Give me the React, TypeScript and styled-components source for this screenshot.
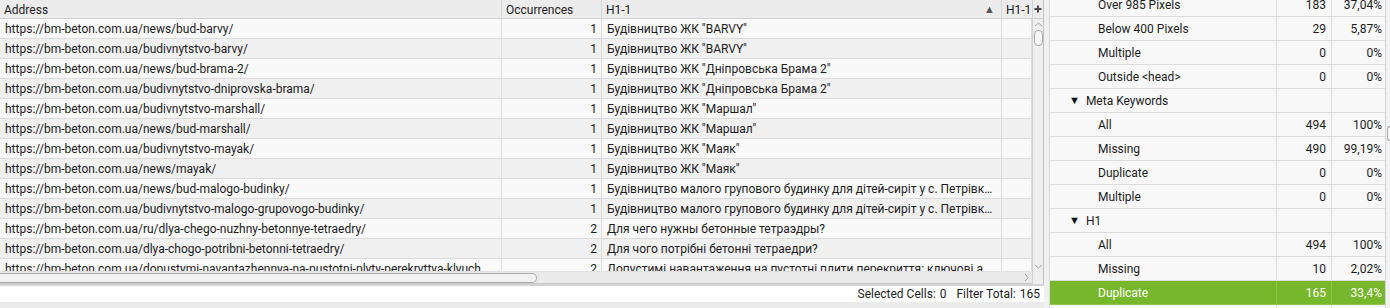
import React from "react";
import styled, { createGlobalStyle } from "styled-components";

const GlobalStyle = createGlobalStyle`
  html, body {
    margin: 0;
    padding: 0;
    background: #ebebeb;
  }
  * {
    box-sizing: border-box;
  }
`;

type Row = { url: string; count: number; h1: string };

const rows: Row[] = [
  { url: "https://bm-beton.com.ua/news/bud-barvy/", count: 1, h1: 'Будівництво ЖК "BARVY"' },
  { url: "https://bm-beton.com.ua/budivnytstvo-barvy/", count: 1, h1: 'Будівництво ЖК "BARVY"' },
  { url: "https://bm-beton.com.ua/news/bud-brama-2/", count: 1, h1: 'Будівництво ЖК "Дніпровська Брама 2"' },
  { url: "https://bm-beton.com.ua/budivnytstvo-dniprovska-brama/", count: 1, h1: 'Будівництво ЖК "Дніпровська Брама 2"' },
  { url: "https://bm-beton.com.ua/budivnytstvo-marshall/", count: 1, h1: 'Будівництво ЖК "Маршал"' },
  { url: "https://bm-beton.com.ua/news/bud-marshall/", count: 1, h1: 'Будівництво ЖК "Маршал"' },
  { url: "https://bm-beton.com.ua/budivnytstvo-mayak/", count: 1, h1: 'Будівництво ЖК "Маяк"' },
  { url: "https://bm-beton.com.ua/news/mayak/", count: 1, h1: 'Будівництво ЖК "Маяк"' },
  {
    url: "https://bm-beton.com.ua/news/bud-malogo-budinky/",
    count: 1,
    h1: "Будівництво малого групового будинку для дітей-сиріт у с. Петрівка Київської області",
  },
  {
    url: "https://bm-beton.com.ua/budivnytstvo-malogo-grupovogo-budinky/",
    count: 1,
    h1: "Будівництво малого групового будинку для дітей-сиріт у с. Петрівка Київської області",
  },
  { url: "https://bm-beton.com.ua/ru/dlya-chego-nuzhny-betonnye-tetraedry/", count: 2, h1: "Для чего нужны бетонные тетраэдры?" },
  { url: "https://bm-beton.com.ua/dlya-chogo-potribni-betonni-tetraedry/", count: 2, h1: "Для чого потрібні бетонні тетраедри?" },
  {
    url: "https://bm-beton.com.ua/dopustymi-navantazhennya-na-pustotni-plyty-perekryttya-klyuch",
    count: 2,
    h1: "Допустимі навантаження на пустотні плити перекриття: ключові а",
  },
];

type Stat = { label: string; count?: string; pct?: string; group?: boolean; active?: boolean };

const stats: Stat[] = [
  { label: "Over 985 Pixels", count: "183", pct: "37,04%" },
  { label: "Below 400 Pixels", count: "29", pct: "5,87%" },
  { label: "Multiple", count: "0", pct: "0%" },
  { label: "Outside <head>", count: "0", pct: "0%" },
  { label: "Meta Keywords", group: true },
  { label: "All", count: "494", pct: "100%" },
  { label: "Missing", count: "490", pct: "99,19%" },
  { label: "Duplicate", count: "0", pct: "0%" },
  { label: "Multiple", count: "0", pct: "0%" },
  { label: "H1", group: true },
  { label: "All", count: "494", pct: "100%" },
  { label: "Missing", count: "10", pct: "2,02%" },
  { label: "Duplicate", count: "165", pct: "33,4%", active: true },
  { label: "" },
];

const Page = styled.div`
  display: flex;
  width: 1390px;
  height: 308px;
  overflow: hidden;
  font-family: Roboto, "Liberation Sans", Arial, sans-serif;
  font-size: 12px;
  color: #1c1c1c;
  background: #ebebeb;
`;

const LeftPane = styled.div`
  display: flex;
  flex-direction: column;
  width: 1044px;
  flex-shrink: 0;
`;

const TableArea = styled.div`
  display: flex;
  height: 286px;
  border-bottom: 2px solid #d4d4d4;
  background: #f4f4f4;
`;

const GridCol = styled.div`
  display: flex;
  flex-direction: column;
  width: 1032px;
  overflow: hidden;
`;

const HeaderRow = styled.div`
  display: grid;
  grid-template-columns: 502px 100px 400px 30px;
  height: 19px;
  background: #ececec;
  border-bottom: 1px solid #cfcfcf;
`;

const HeadCell = styled.div<{ $last?: boolean }>`
  display: flex;
  align-items: center;
  justify-content: space-between;
  padding: 1px 5px 0 4px;
  border-right: ${(p) => (p.$last ? "none" : "1px solid #d6d6d6")};
  white-space: nowrap;
  overflow: hidden;
`;

const SortArrow = styled.span`
  font-size: 11px;
  color: #555;
  margin-right: 1px;
`;

const Body = styled.div`
  flex: 1;
  overflow: hidden;
`;

const DataRow = styled.div<{ $alt: boolean }>`
  display: grid;
  grid-template-columns: 502px 100px 400px 30px;
  height: 20px;
  background: ${(p) => (p.$alt ? "#f0f0f0" : "#f9f9f9")};
  border-bottom: 1px solid #dcdcdc;
`;

const Cell = styled.div<{ $num?: boolean }>`
  display: flex;
  align-items: center;
  justify-content: ${(p) => (p.$num ? "flex-end" : "flex-start")};
  padding: 1px 4px 0 5px;
  border-right: 1px solid #dcdcdc;
  white-space: nowrap;
  overflow: hidden;
  min-width: 0;
`;

const Ellip = styled.span`
  overflow: hidden;
  text-overflow: ellipsis;
  white-space: nowrap;
`;

const HScroll = styled.div`
  height: 13px;
  flex-shrink: 0;
  display: flex;
  align-items: center;
  justify-content: space-between;
  background: #eaeaea;
  border-top: 1px solid #e0e0e0;
  border-bottom: 1px solid #c6c6c6;
  padding-right: 2px;
`;

const HThumb = styled.div`
  width: 537px;
  height: 10px;
  border: 1px solid #a9a9a9;
  border-left: none;
  border-radius: 0 5px 5px 0;
  background: #f2f2f2;
`;

const SideCol = styled.div`
  display: flex;
  flex-direction: column;
  width: 12px;
  border-left: 1px solid #d2d2d2;
  border-right: 1px solid #c2c2c2;
  background: #efefef;
`;

const PlusCell = styled.div`
  height: 19px;
  display: flex;
  align-items: center;
  justify-content: center;
  background: #ececec;
  border-bottom: 1px solid #cfcfcf;
`;

const VScroll = styled.div`
  flex: 1;
  display: flex;
  flex-direction: column;
  align-items: center;
  padding-top: 2px;
`;

const VThumb = styled.div`
  width: 9px;
  height: 16px;
  margin-top: 2px;
  border: 1px solid #a9a9a9;
  border-radius: 4px;
  background: #f6f6f6;
`;

const VSpacer = styled.div<{ $fixed?: number }>`
  flex: ${(p) => (p.$fixed ? `0 0 ${p.$fixed}px` : "1")};
`;

const StatusBar = styled.div`
  height: 16px;
  display: flex;
  align-items: center;
  justify-content: flex-end;
  gap: 4px;
  padding-right: 4px;
  background: #ffffff;
`;

const StatusGap = styled.span`
  width: 2px;
`;

const BottomStrip = styled.div`
  flex: 1;
  background: #ebebeb;
`;

const Gutter = styled.div`
  width: 6px;
  flex-shrink: 0;
  background: #f0f0f0;
  border-right: 1px solid #d8d8d8;
`;

const RightPane = styled.div`
  flex: 1;
  display: flex;
  overflow: hidden;
  background: #f8f8f8;
`;

const StatList = styled.div`
  flex: 1;
  margin-top: -7px;
`;

const StatRow = styled.div<{ $active?: boolean }>`
  display: grid;
  grid-template-columns: 227px 55px 53px;
  height: 24px;
  background: ${(p) => (p.$active ? "#77b72b" : "transparent")};
  color: ${(p) => (p.$active ? "#ffffff" : "#1c1c1c")};
  border-bottom: 1px solid ${(p) => (p.$active ? "#8fc44f" : "#dcdcdc")};
`;

const StatLabel = styled.div<{ $group?: boolean; $active?: boolean }>`
  display: flex;
  align-items: center;
  gap: 6px;
  padding-left: ${(p) => (p.$group ? "19px" : "48px")};
  border-right: 1px solid ${(p) => (p.$active ? "#8fc44f" : "#dcdcdc")};
  white-space: nowrap;
`;

const StatNum = styled.div<{ $active?: boolean; $pad: number; $line?: boolean }>`
  display: flex;
  align-items: center;
  justify-content: flex-end;
  padding-right: ${(p) => p.$pad}px;
  border-right: ${(p) => (p.$line ? `1px solid ${p.$active ? "#8fc44f" : "#dcdcdc"}` : "none")};
`;

const Caret = styled.span`
  font-size: 11px;
  color: #111;
`;

const RScroll = styled.div`
  width: 5px;
  flex-shrink: 0;
  display: flex;
  flex-direction: column;
  border-left: 1px solid #d6d6d6;
  background: #f2f2f2;
  padding-top: 126px;
`;

const RThumb = styled.div`
  width: 4px;
  height: 15px;
  margin-left: 1px;
  border: 1px solid #a9a9a9;
  border-right: none;
  border-radius: 3px 0 0 3px;
  background: #f6f6f6;
`;

const Chevron = ({ dir }: { dir: "up" | "down" | "right" }) => {
  const d =
    dir === "up" ? "M1 5 L4.5 2 L8 5" : dir === "down" ? "M1 2 L4.5 5 L8 2" : "M2 1 L5 4.5 L2 8";
  const w = dir === "right" ? 7 : 9;
  const h = dir === "right" ? 9 : 7;
  return (
    <svg width={w} height={h} viewBox={`0 0 ${w} ${h}`}>
      <path d={d} fill="none" stroke="#a0a0a0" strokeWidth="1" />
    </svg>
  );
};

const PlusIcon = () => (
  <svg width="8" height="8" viewBox="0 0 8 8">
    <path d="M4 0.5 V7.5 M0.5 4 H7.5" stroke="#4a4a4a" strokeWidth="2" />
  </svg>
);

export default function App() {
  return (
    <>
      <GlobalStyle />
      <Page>
        <LeftPane>
          <TableArea>
            <GridCol>
              <HeaderRow>
                <HeadCell>Address</HeadCell>
                <HeadCell>Occurrences</HeadCell>
                <HeadCell>
                  <span>H1-1</span>
                  <SortArrow>▲</SortArrow>
                </HeadCell>
                <HeadCell $last>H1-1</HeadCell>
              </HeaderRow>
              <Body>
                {rows.map((r, i) => (
                  <DataRow key={i} $alt={i % 2 === 1}>
                    <Cell>{r.url}</Cell>
                    <Cell $num>{r.count}</Cell>
                    <Cell>
                      <Ellip>{r.h1}</Ellip>
                    </Cell>
                    <Cell />
                  </DataRow>
                ))}
              </Body>
              <HScroll>
                <HThumb />
                <Chevron dir="right" />
              </HScroll>
            </GridCol>
            <SideCol>
              <PlusCell>
                <PlusIcon />
              </PlusCell>
              <VScroll>
                <Chevron dir="up" />
                <VThumb />
                <VSpacer />
                <Chevron dir="down" />
                <VSpacer $fixed={14} />
              </VScroll>
            </SideCol>
          </TableArea>
          <StatusBar>
            <span>Selected Cells:</span>
            <span>0</span>
            <StatusGap />
            <span>Filter Total:</span>
            <span>165</span>
          </StatusBar>
          <BottomStrip />
        </LeftPane>
        <Gutter />
        <RightPane>
          <StatList>
            {stats.map((s, i) => (
              <StatRow key={i} $active={s.active}>
                <StatLabel $group={s.group} $active={s.active}>
                  {s.group && <Caret>▼</Caret>}
                  {s.label}
                </StatLabel>
                <StatNum $pad={5} $line $active={s.active}>
                  {s.count}
                </StatNum>
                <StatNum $pad={3} $active={s.active}>
                  {s.pct}
                </StatNum>
              </StatRow>
            ))}
          </StatList>
          <RScroll>
            <RThumb />
          </RScroll>
        </RightPane>
      </Page>
    </>
  );
}
